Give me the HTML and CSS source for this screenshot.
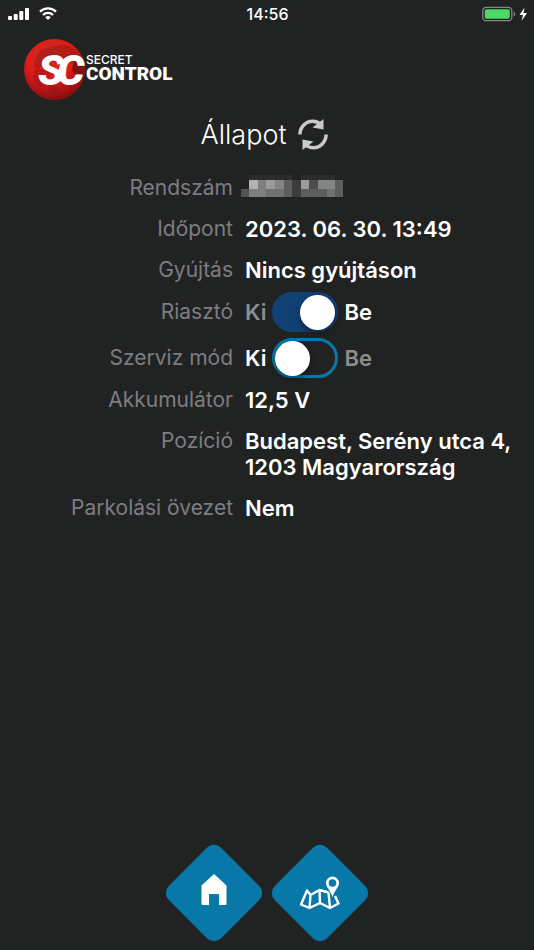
FILE: index.html
```html
<!DOCTYPE html>
<html lang="hu">
<head>
<meta charset="utf-8">
<meta name="viewport" content="width=device-width, initial-scale=1">
<title>Secret Control</title>
<link rel="stylesheet" href="styles.css">
</head>
<body>
<div class="statusbar">
  <div class="statusbar-left">
    <svg width="22" height="14" viewBox="0 0 22 14" fill="#fff" aria-hidden="true"><rect x="0" y="9" width="4" height="4" rx="1"/><rect x="5.700" y="7" width="4" height="6" rx="1"/><rect x="11.300" y="4" width="4" height="9" rx="1"/><rect x="17" y="1" width="4" height="12" rx="1"/></svg>
    <svg width="18" height="14" viewBox="0 0 18 14" fill="none" stroke="#fff" stroke-width="2.4" aria-hidden="true"><path d="M1 4.700a11.3 11.3 0 0 1 16 0M4 8a7 7 0 0 1 10 0"/><path d="M9 13 6.2 10.300a4 4 0 0 1 5.6 0z" fill="#fff" stroke="none"/></svg>
  </div>
  <time class="clock">14:56</time>
  <div class="statusbar-right">
    <svg width="45" height="16" viewBox="0 0 45 16" aria-hidden="true"><rect x=".8" y="1.3" width="29" height="13.4" rx="3.5" fill="none" stroke="#858686" stroke-width="1.3"/><rect x="2.8" y="3.2" width="25" height="9.6" rx="1.8" fill="#4cd964"/><path d="M31.7 5.5v5c2-.8 2-4.200 0-5z" fill="#858686"/><path d="M42.500 1.500 37.500 9h3.500l-1.500 6 5.500-8h-3.500z" fill="#fff"/></svg>
  </div>
</div>
<header class="brand">
  <svg width="62" height="62" viewBox="0 0 62 62" role="img" aria-label="SC">
    <defs>
      <radialGradient id="globe" cx=".42" cy=".3" r=".68"><stop offset="0" stop-color="#c92d22"/><stop offset=".55" stop-color="#e01b18"/><stop offset="1" stop-color="#8f1011"/></radialGradient>
    </defs>
    <circle cx="30.500" cy="30.500" r="30.500" fill="url(#globe)"/>
    <path fill="#8f1714" opacity=".5" d="M14 14c4-5 9-4 13-6 5-2 12-3 18-1 6 3 9 7 12 13-4 0-5 4-8 3-5-2-7-4-12-3-5 0-8 3-12 2-4 0-6 5-10 8-3 0-5-3-5-6zM10 31c6-2 13 0 18 3l-3 5c-2 5-4 8-9 9-5-3-8-9-6-17zM24 46c5 1 10 0 13 4l-3 5-5 4c-3-4-4-8-5-13z"/>
    <path fill="#6d1210" opacity=".8" d="M50 22l7-2 3 8-1 12-4-5-4 1-3-5z"/>
    <text class="mono" x="14" y="46">S</text>
    <text class="mono" x="33" y="46">C</text>
  </svg>
  <div class="wordmark"><span class="wordmark-top">SECRET</span><span class="wordmark-main">CONTROL</span></div>
</header>
<main>
  <div class="heading">
    <h1>Állapot</h1>
    <button class="refresh" type="button" aria-label="Frissítés">
      <svg width="30" height="32" viewBox="0 0 30 32" aria-hidden="true"><g id="arc"><path d="M1.900 15.500C2 8 8 2.300 14.500 2.300c3.500 0 6 1.200 8 3" fill="none" stroke="#c9caca" stroke-width="3.500"/><path d="M25.500 0v10.500L14.500 8.500z" fill="#c9caca"/></g><use href="#arc" transform="rotate(180 15 15.500)"/></svg>
    </button>
  </div>
  <dl class="status">
    <div class="row"><dt>Rendszám</dt><dd>
      <svg class="plate" width="103" height="23" viewBox="0 0 103 23" aria-hidden="true" shape-rendering="crispEdges"><path fill="#2b2c2c" d="M8 0h43v5H8zM60 0h34v5H60z"/><path fill="#525353" d="M0 14h8v8H0z"/><path fill="#b2b2b2" d="M8 5h9v9H8z"/><path fill="#7e7f7f" d="M17 5h8v9h-8zM8 14h17v8H8z"/><path fill="#9b9b9b" d="M25 5h9v9h-9zM60 5h8v9h-8z"/><path fill="#838484" d="M34 5h9v9h-9zM77 5h17v9H77z"/><path fill="#707171" d="M25 14h18v8H25zM86 14h8v8h-8z"/><path fill="#5c5d5d" d="M43 5h8v17h-8zM60 14h26v8H60zM94 5h8v17h-8z"/><path fill="#3b3c3c" d="M51 5h9v17h-9z"/><path fill="#4b4c4c" d="M68 5h9v9h-9z"/></svg></dd></div>
    <div class="row"><dt>Időpont</dt><dd>2023. 06. 30. 13:49</dd></div>
    <div class="row"><dt>Gyújtás</dt><dd>Nincs gyújtáson</dd></div>
    <div class="row row-switch"><dt><label for="alarm">Riasztó</label></dt><dd><span class="off">Ki</span><input class="switch" id="alarm" type="checkbox" role="switch" checked><span class="on">Be</span></dd></div>
    <div class="row row-switch"><dt><label for="service">Szerviz mód</label></dt><dd><span class="off">Ki</span><input class="switch" id="service" type="checkbox" role="switch"><span class="on">Be</span></dd></div>
    <div class="row"><dt>Akkumulátor</dt><dd>12,5 V</dd></div>
    <div class="row"><dt>Pozíció</dt><dd>Budapest, Serény utca 4, 1203 Magyarország</dd></div>
    <div class="row"><dt>Parkolási övezet</dt><dd>Nem</dd></div>
  </dl>
</main>
<nav class="tabs">
  <a class="tab" href="#home" aria-label="Kezdőlap"><svg width="26" height="38" viewBox="0 0 26 38" aria-hidden="true"><path fill="#fff" d="M13 0 25.500 11.500V30q0 1-1 1H18V20H8v11H1.500q-1 0-1-1V11.500z"/></svg></a>
  <a class="tab" href="#map" aria-label="Térkép"><svg width="42" height="34" viewBox="0 0 42 34" fill="none" stroke="#fff" stroke-width="2.400" stroke-linejoin="round" aria-hidden="true"><path d="M29.500 16.500 20.500 14 11.500 19 8 14.500 2 28.500 10.500 32 21 27 31 32 39.500 27.500 36 20M11.500 19 10.500 32M20.500 14 21 27M29.500 16.500 31 32"/><path fill="#fff" stroke="none" fill-rule="evenodd" d="M33.500.5a6.500 6.500 0 0 0-6.500 6.500c0 4 4.500 7.500 6.500 14 2-6.500 6.500-10 6.500-14A6.500 6.500 0 0 0 33.500.5zm0 2.700a3.800 3.800 0 1 1 0 7.600 3.800 3.800 0 0 1 0-7.600z"/></svg></a>
</nav>
</body>
</html>
```

FILE: styles.css
```css
* {
  box-sizing: border-box;
}

body {
  display: flex;
  flex-direction: column;
  min-height: 100vh;
  margin: 0;
  background: #212322;
  color: #fff;
  font-family: Inter, "Liberation Sans", sans-serif;
  font-size: 22px;
  line-height: 26px;
}

svg {
  display: block;
}

.statusbar {
  display: grid;
  grid-template-columns: 1fr auto 1fr;
  align-items: center;
  height: 27px;
  padding: 0 7px 0 8px;
}

.statusbar-left {
  display: flex;
  gap: 9px;
}

.statusbar-right {
  justify-self: end;
}

.clock {
  font-size: 16px;
  font-weight: 500;
}

.brand {
  display: flex;
  align-items: center;
  padding: 12px 24px 0;
}

.mono {
  fill: #fff;
  font-family: Roboto, sans-serif;
  font-size: 43px;
  font-style: italic;
  font-weight: 900;
}

.wordmark {
  display: flex;
  flex-direction: column;
  padding-bottom: 6px;
}

.wordmark-top {
  font-size: 12px;
  font-weight: 500;
  line-height: 14px;
}

.wordmark-main {
  font-family: Roboto, sans-serif;
  font-size: 19px;
  font-weight: 900;
  line-height: 14px;
}

.heading {
  display: flex;
  align-items: center;
  justify-content: center;
  gap: 12px;
  padding: 18px 5px 0 0;
}

h1 {
  margin: 0;
  font-size: 27px;
  font-weight: 300;
  line-height: 32px;
}

.refresh {
  padding: 0;
  border: 0;
  background: none;
}

.status {
  display: flex;
  flex-direction: column;
  gap: 15px;
  margin: 0;
  padding: 24px 0;
}

.row {
  display: grid;
  grid-template-columns: 233fr 289fr;
  gap: 12px;
}

.row-switch {
  margin-top: 1px;
}

.row-switch + .row-switch {
  margin: 5px 0 1px;
}

dt {
  color: #7c7d82;
  font-size: 21px;
  text-align: right;
}

dd {
  margin: 0;
  padding-right: 16px;
  font-weight: 600;
}

.plate {
  margin-left: -4px;
}

.row-switch dd {
  display: flex;
  align-items: center;
  gap: 6px;
}

.switch {
  appearance: none;
  display: flex;
  align-items: center;
  width: 66px;
  height: 40px;
  margin: -7px 0;
  border: 3px solid #0878a8;
  border-radius: 20px;
}

.switch::before {
  content: "";
  width: 35px;
  height: 35px;
  border-radius: 50%;
  background: #fff;
  box-shadow: 0 3px 6px #0006;
}

.switch:checked {
  justify-content: flex-end;
  border-color: #114075;
  background: #114075;
}

.off:has(+ .switch:checked),
.switch:not(:checked) + .on {
  color: #8c8d8d;
}

.tabs {
  display: flex;
  justify-content: center;
  gap: 32px;
  margin-top: auto;
  padding-bottom: 20px;
}

.tab {
  display: grid;
  place-items: center;
  width: 74px;
  height: 74px;
  border-radius: 10px;
  background: #0878a8;
  transform: rotate(45deg);
}

.tab svg {
  transform: rotate(-45deg);
}
```
